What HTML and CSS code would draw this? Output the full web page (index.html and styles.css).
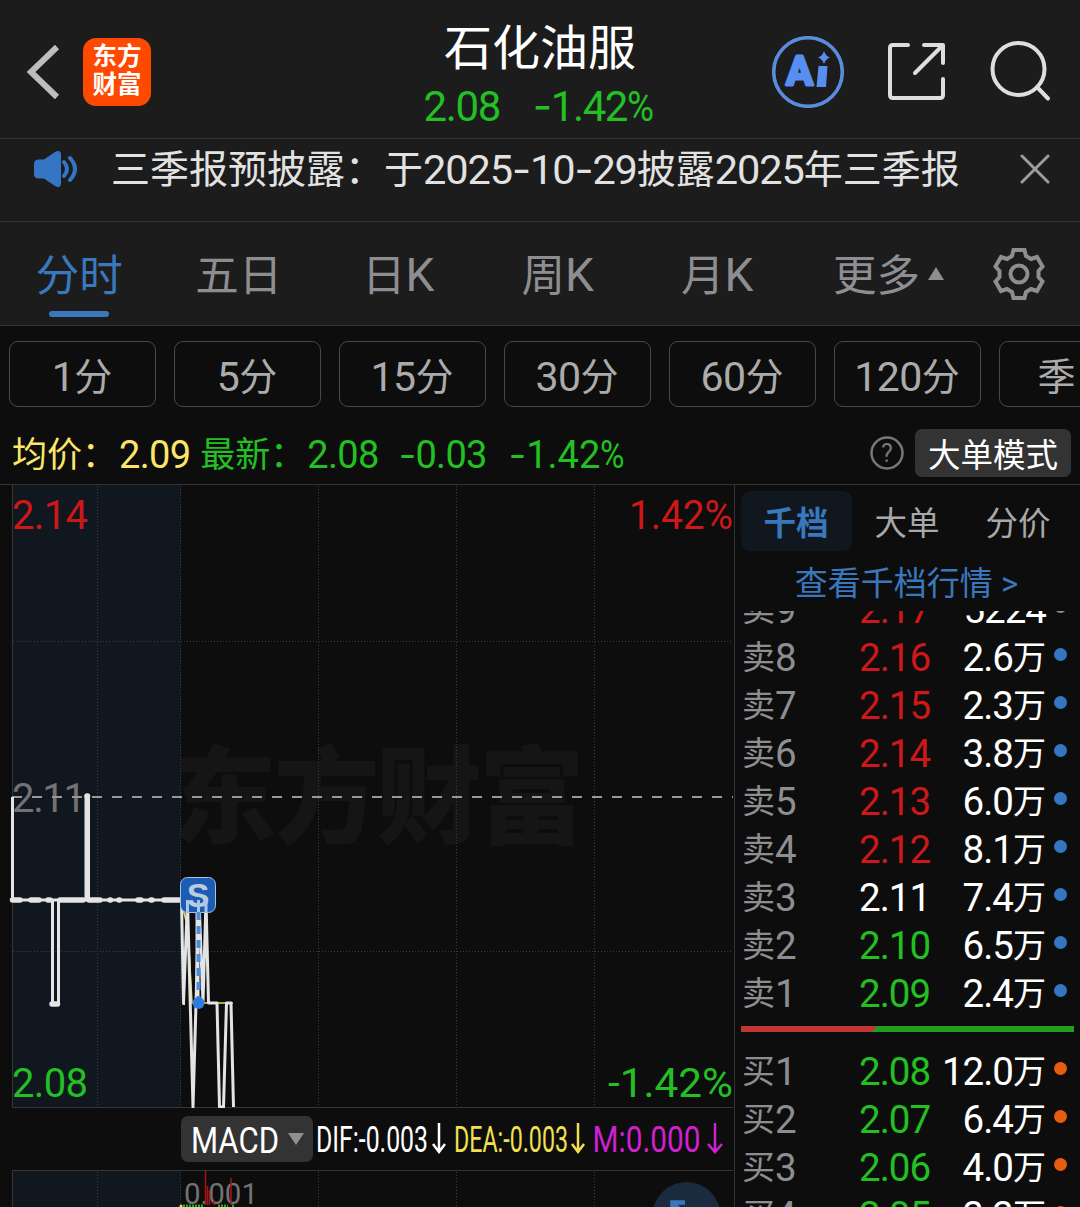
FILE: index.html
```html
<!DOCTYPE html>
<html lang="zh-CN">
<head>
  <meta charset="UTF-8" />
  <meta name="viewport" content="width=device-width, initial-scale=1.0"/>
  <title>石化油服 2.08</title>
  <link rel="stylesheet" href="styles.css">
</head>
<body>
  <header class="header">
    <div class="header-left">
      <svg class="back" width="36" height="58" viewBox="0 0 36 58"><path d="M32 4 L6 29 L32 54" fill="none" stroke="#bdbdbd" stroke-width="6"/></svg>
      <div class="logo">东方<br>财富</div>
    </div>
    <div class="stock">
      <h1>石化油服</h1>
      <p class="quote green"><span>2.08</span><span><i class="dash">-</i>1.42<i class="pct">%</i></span></p>
    </div>
    <div class="header-right">
      <svg width="72" height="72" viewBox="0 0 72 72">
        <circle cx="36" cy="36" r="34.3" fill="none" stroke="#5a8cdc" stroke-width="3.6"/>
        <text class="ai-text" x="14" y="48.500" textLength="27" lengthAdjust="spacingAndGlyphs">A</text>
        <path d="M46.500 30 h9 l-1.500 21 h-9.500z M52 15 q1.500 5 6 6.500 q-4.500 1.500 -6 6.500 q-1.500 -5 -6 -6.500 q4.500 -1.500 6 -6.500z" fill="#568ff0"/>
      </svg>
      <svg width="60" height="60" viewBox="0 0 60 60" fill="none" stroke="#dedede" stroke-width="4" stroke-linecap="round" stroke-linejoin="round">
        <path d="M21 3 H6 Q3 3 3 6 V53 Q3 56 6 56 H53 Q56 56 56 53 V37"/>
        <path d="M37 3 H56 V21 M55 4 L28 31"/>
      </svg>
      <svg width="62" height="62" viewBox="0 0 62 62" fill="none" stroke="#dedede" stroke-width="4" stroke-linecap="round">
        <circle cx="28.500" cy="28" r="26"/>
        <path d="M47 46 L58 57.500"/>
      </svg>
    </div>
  </header>

  <div class="notice">
    <svg width="46" height="38" viewBox="0 0 46 38">
      <path d="M1 14 Q1 9.500 6 9.500 H11 L22 2 Q28 -1 28 5 V33 Q28 39 22 36 L11 28.500 H6 Q1 28.500 1 24z" fill="#3576c4"/>
      <path d="M31 12 Q37 19 31 26 M37 8 Q47 19 37 30" fill="none" stroke="#3576c4" stroke-width="4" stroke-linecap="round"/>
    </svg>
    <p>三季报预披露：于<span class="num">2025<i class="dash">-</i>10<i class="dash">-</i>29</span>披露<span class="num">2025</span>年三季报</p>
    <svg class="close" width="30" height="30" viewBox="0 0 30 30"><path d="M2 2 L28 28 M28 2 L2 28" stroke="#9c9c9c" stroke-width="3" stroke-linecap="round"/></svg>
  </div>

  <nav class="tabs">
    <a class="tab active">分时</a>
    <a class="tab">五日</a>
    <a class="tab">日<span>K</span></a>
    <a class="tab">周<span>K</span></a>
    <a class="tab">月<span>K</span></a>
    <a class="tab more">更多<svg width="16" height="14" viewBox="0 0 16 14"><path d="M8 1 L16 14 H0z" fill="#8e8e92"/></svg></a>
    <svg class="gear" width="54" height="54" viewBox="0 0 54 54" fill="none" stroke="#8e8e92" stroke-width="4">
      <path d="M21.500 3 H32.500 L34 9 L39 12 L45 10 L50.500 19.500 L46.500 24 V30 L50.500 34.500 L45 44 L39 42 L34 45 L32.500 51 H21.500 L20 45 L15 42 L9 44 L3.500 34.500 L7.500 30 V24 L3.500 19.500 L9 10 L15 12 L20 9z"/>
      <circle cx="27" cy="27" r="8.500"/>
    </svg>
  </nav>

  <div class="periods">
    <button><span>1</span>分</button>
    <button><span>5</span>分</button>
    <button><span>15</span>分</button>
    <button><span>30</span>分</button>
    <button><span>60</span>分</button>
    <button><span>120</span>分</button>
    <button>季<span>K</span></button>
  </div>

  <div class="info">
    <span class="yellow">均价：<span class="num">2.09</span></span>
    <span class="green latest">最新：<span class="num">2.08</span></span>
    <span class="green change"><span class="num"><i class="dash">-</i>0.03</span></span>
    <span class="green change"><span class="num"><i class="dash">-</i>1.42<i class="pct">%</i></span></span>
    <svg class="help" width="34" height="34" viewBox="0 0 34 34"><circle cx="17" cy="17" r="15.500" fill="none" stroke="#777" stroke-width="2.500"/><text x="17" y="26" text-anchor="middle">?</text></svg>
    <button class="mode">大单模式</button>
  </div>

  <main class="main">
    <section class="charts">
      <!-- price line -->
      <svg class="price-chart" width="734" height="623" viewBox="0 485 734 623">
        <rect x="12" y="485" width="169" height="622" fill="#10171f"/>
        <text class="watermark" x="171" y="835" textLength="414">东方财富</text>
        <g class="grid">
          <path d="M97.500 486V1107 M180.500 486V1107 M318.500 486V1107 M456.500 486V1107 M594.500 486V1107"/>
          <path d="M13 641.500H733 M13 951.500H733"/>
        </g>
        <path class="frame" d="M12.500 485V1107.500H733"/>
        <text class="label grey" x="12" y="812" textLength="74">2.11</text>
        <path d="M12 797H733" stroke="#999" stroke-width="2" stroke-dasharray="10 10"/>

        <path d="M181 900 L186 921 M187 910 L192 1003 H233" fill="none" stroke="#e8dc50" stroke-width="1.500"/>
        <g fill="none" stroke="#e4e4e4" stroke-width="3">
          <path d="M12.500 797V900H181"/>
          <path d="M52.500 900V1004H58.500V900 M86 900V797H88.500V900"/>
          <path d="M181.500 900 L183.500 1003 L187.500 900 L193 1107 L199 900 L203 1003 L206 900 L208.500 1003 H217 L219.500 1107 H223.500 L226.500 1003 H231 L233.500 1107" stroke-linejoin="round"/>
          <path d="M197.500 1003V905 M182.500 1003 H185" stroke-width="4"/>
        </g>
        <path class="ticks" d="M12.500 900H20 M31 900H39 M48 900H50 M60 900H83 M89 900H100 M110 900H110.500 M119 900H119.500 M138 900H141 M151 900H152 M164 900H180 M52 1004H57.500 M87 796H87.500"/>

        <rect x="180.500" y="877.500" width="35" height="35" rx="7" fill="#1a5db2" stroke="#a9c2e4"/>
        <text class="sell" x="198" y="907" text-anchor="middle">S</text>
        <path d="M187.500 900V912 M198.500 900V912 M206 900V912" stroke="#a9c6ee" stroke-width="3"/>
        <path d="M198.500 912V1000" stroke="#4b8ce0" stroke-width="4" stroke-dasharray="8 6"/>
        <circle cx="198.500" cy="1003" r="6" fill="#2f7be0"/>

        <text class="label red" x="12" y="528.500" textLength="76">2.14</text>
        <text class="label red" x="629" y="528.500" textLength="104" lengthAdjust="spacingAndGlyphs">1.42%</text>
        <text class="label green" x="12" y="1097" textLength="76">2.08</text>
        <text class="label green" x="608" y="1097" textLength="125" lengthAdjust="spacingAndGlyphs">-1.42%</text>
      </svg>

      <div class="indicator">
        <button class="macd">
          <svg width="92" height="45" viewBox="-2 0 92 45"><text x="0" y="35.500" textLength="88" lengthAdjust="spacingAndGlyphs">MACD</text></svg>
          <svg width="16" height="14" viewBox="0 0 16 14"><path d="M0 1 H16 L8 13z" fill="#909090"/></svg>
        </button>
        <svg class="readout" width="420" height="62" viewBox="313 1108 420 62">
          <text x="316" y="1152" fill="#fff" textLength="112" lengthAdjust="spacingAndGlyphs">DIF:-0.003</text>
          <path d="M439 1123V1152 M433 1144L439 1152L445 1144" stroke="#fff"/>
          <text x="454" y="1152" fill="#f0e050" textLength="114" lengthAdjust="spacingAndGlyphs">DEA:-0.003</text>
          <path d="M578 1123V1152 M572 1144L578 1152L584 1144" stroke="#f0e050"/>
          <text x="592.500" y="1152" fill="#d020d0" textLength="108" lengthAdjust="spacingAndGlyphs">M:0.000</text>
          <path d="M715 1123V1152 M708 1144L715 1152L722 1144" stroke="#d020d0"/>
        </svg>
      </div>

      <!-- MACD bars -->
      <svg class="macd-chart" width="734" height="37" viewBox="0 1170 734 37">
        <rect x="12" y="1170" width="169" height="37" fill="#10171f"/>
        <path class="grid" d="M97.500 1172V1207 M180.500 1172V1207 M318.500 1172V1207 M456.500 1172V1207 M594.500 1172V1207"/>
        <path class="frame" d="M12.500 1207V1170.500H733"/>
        <text class="scale" x="184" y="1203.500" textLength="74">0.001</text>
        <path d="M205.500 1171V1205 M207.500 1186V1205 M209.500 1190V1205 M231 1178V1205 M214 1200V1205" stroke="#a81414" stroke-width="1.500"/>
        <path d="M183 1206H203 M218 1206H228 M232 1206H234" stroke="#18b418" stroke-width="3" stroke-dasharray="2 1"/>
        <circle cx="181" cy="1206" r="1.500" fill="#f0e050"/>
        <circle cx="686.500" cy="1216" r="34" fill="#1a2b40"/>
        <path d="M672.500 1214V1202.500H685 M673 1203L684 1214" fill="none" stroke="#3a78be" stroke-width="4.500"/>
      </svg>
    </section>

    <aside class="book">
      <div class="book-tabs">
        <a class="active">千档</a>
        <a>大单</a>
        <a>分价</a>
      </div>
      <a class="book-link">查看千档行情 &gt;</a>
      <div class="levels">
        <div class="row first"><span>卖<b>9</b></span><b class="red">2.17</b><span class="vol"><b>5224</b></span><i class="dot none"></i></div>
        <div class="row"><span>卖<b>8</b></span><b class="red">2.16</b><span class="vol"><b>2.6</b>万</span><i class="dot"></i></div>
        <div class="row"><span>卖<b>7</b></span><b class="red">2.15</b><span class="vol"><b>2.3</b>万</span><i class="dot"></i></div>
        <div class="row"><span>卖<b>6</b></span><b class="red">2.14</b><span class="vol"><b>3.8</b>万</span><i class="dot"></i></div>
        <div class="row"><span>卖<b>5</b></span><b class="red">2.13</b><span class="vol"><b>6.0</b>万</span><i class="dot"></i></div>
        <div class="row"><span>卖<b>4</b></span><b class="red">2.12</b><span class="vol"><b>8.1</b>万</span><i class="dot"></i></div>
        <div class="row"><span>卖<b>3</b></span><b class="white">2.11</b><span class="vol"><b>7.4</b>万</span><i class="dot"></i></div>
        <div class="row"><span>卖<b>2</b></span><b class="green">2.10</b><span class="vol"><b>6.5</b>万</span><i class="dot"></i></div>
        <div class="row"><span>卖<b>1</b></span><b class="green">2.09</b><span class="vol"><b>2.4</b>万</span><i class="dot"></i></div>
        <div class="ratio"></div>
        <div class="row"><span>买<b>1</b></span><b class="green">2.08</b><span class="vol"><b>12.0</b>万</span><i class="dot buy"></i></div>
        <div class="row"><span>买<b>2</b></span><b class="green">2.07</b><span class="vol"><b>6.4</b>万</span><i class="dot buy"></i></div>
        <div class="row"><span>买<b>3</b></span><b class="green">2.06</b><span class="vol"><b>4.0</b>万</span><i class="dot buy"></i></div>
        <div class="row"><span>买<b>4</b></span><b class="green">2.05</b><span class="vol"><b>3.3</b>万</span><i class="dot buy"></i></div>
      </div>
    </aside>
  </main>
</body>
</html>
```
FILE: styles.css
```css
* {
  box-sizing: border-box;
}
body {
  margin: 0;
  width: 1080px;
  height: 1207px;
  overflow: hidden;
  background: #0d0d0d;
  color: #8e8e92;
  font-family: Roboto, "Noto Sans CJK SC", sans-serif;
}
h1, p {
  margin: 0;
  font-weight: normal;
}
i, b {
  font-style: normal;
  font-weight: normal;
}
button {
  font-family: inherit;
  border: none;
  padding: 0;
}
svg {
  flex: none;
}
.green {
  color: #22c022;
  fill: #22c022;
}
.red {
  color: #cc1818;
  fill: #cc1818;
}
.grey {
  fill: #727274;
}
.white {
  color: #fff;
}
.yellow {
  color: #fbe668;
}
.dash {
  font-family: Inter, sans-serif;
  line-height: 0;
}
.pct {
  display: inline-block;
  line-height: 0;
  transform: scaleX(0.88);
  transform-origin: left;
  margin-right: -4px;
}

/* Header */
.header {
  display: grid;
  grid-template-columns: 1fr auto 1fr;
  height: 139px;
  background: #1c1c1c;
  border-bottom: 1px solid #333;
}
.header-left {
  display: flex;
  align-items: center;
  gap: 22px;
  height: 143px;
  padding-left: 25px;
}
.logo {
  width: 68px;
  height: 68px;
  padding-top: 5px;
  border-radius: 13px;
  background: #ff4800;
  color: #fff;
  font-size: 24.500px;
  font-weight: bold;
  line-height: 28px;
  text-align: center;
}
.stock {
  padding-top: 21px;
  text-align: center;
}
.stock h1 {
  color: #fff;
  font-size: 48px;
  line-height: 56px;
}
.quote {
  display: flex;
  justify-content: center;
  gap: 33px;
  padding: 6px 4px 0 0;
  font-size: 42px;
  line-height: 48px;
  letter-spacing: -1.400px;
}
.header-right {
  display: flex;
  align-items: center;
  justify-content: flex-end;
  gap: 43px;
  height: 143px;
  padding-right: 28px;
}
.ai-text {
  font-size: 41px;
  font-weight: bold;
  fill: #568ff0;
  stroke: #568ff0;
  stroke-width: 3;
  stroke-linejoin: round;
}

/* Notice */
.notice {
  display: flex;
  align-items: center;
  height: 83px;
  padding: 0 30px 22px 33px;
  background: #1c1c1c;
  border-bottom: 1px solid #333;
  color: #e2e2e2;
  font-size: 39px;
  line-height: 60px;
}
.notice p {
  flex: 1;
  padding: 1px 0 0 32px;
  white-space: nowrap;
}
.notice .num {
  font-size: 41.500px;
  line-height: 0;
  letter-spacing: -1.100px;
  vertical-align: -1px;
}

/* Tabs */
.tabs {
  display: flex;
  align-items: center;
  height: 104px;
  background: #1c1c1c;
  border-bottom: 1px solid #333;
}
.tab {
  position: relative;
  width: 159.500px;
  height: 103px;
  padding: 7px 1px 0 0;
  font-size: 43.500px;
  line-height: 96px;
  text-align: center;
}
.tab span {
  font-size: 46px;
  line-height: 0;
}
.tab.active {
  color: #3a78be;
}
.tab.active::after {
  content: "";
  position: absolute;
  left: 49px;
  bottom: 8px;
  width: 60px;
  height: 6px;
  border-radius: 3px;
  background: #3a78be;
}
.tab.more {
  width: 194px;
  padding-right: 12px;
}
.tab.more svg {
  margin: 0 0 11px 8px;
}

/* Periods */
.periods {
  display: flex;
  gap: 18px;
  padding: 15px 0 0 9px;
  overflow: hidden;
}
.periods button {
  flex: none;
  width: 147px;
  height: 66px;
  padding: 5px 1px 0 0;
  border: 1.500px solid #484848;
  border-radius: 9px;
  background: none;
  color: #ababab;
  font-size: 38px;
  line-height: 58px;
}
.periods span {
  font-size: 41px;
  line-height: 0;
  letter-spacing: -0.500px;
  vertical-align: -1px;
}
.periods button:last-child {
  padding-right: 4px;
}
.periods button:last-child span {
  margin-left: 3px;
}

/* Price summary */
.info {
  display: flex;
  align-items: center;
  height: 78px;
  padding: 15px 9px 0 12px;
  border-bottom: 1px solid #333;
  font-size: 35px;
  line-height: 57px;
  white-space: nowrap;
}
.info > span {
  padding-top: 5px;
}
.info .num {
  font-size: 38px;
  line-height: 0;
  letter-spacing: -0.700px;
  vertical-align: -1px;
}
.info .yellow .num,
.info .latest .num {
  margin-left: 2px;
}
.info .latest {
  margin-left: 10px;
}
.info .change {
  margin-left: 20px;
}
.info .change + .change .num {
  margin-left: 2px;
  letter-spacing: 0;
}
.help {
  margin-left: auto;
}
.help text {
  font-size: 25px;
  fill: #777;
}
.mode {
  width: 156px;
  height: 48px;
  margin-left: 11px;
  padding-top: 6px;
  border-radius: 7px;
  background: #333;
  color: #fff;
  font-size: 32.500px;
  line-height: 42px;
}

/* Charts */
.main {
  display: flex;
  height: 722px;
}
.charts {
  width: 735px;
  border-right: 1px solid #333;
}
.charts > svg {
  display: block;
}
.grid {
  fill: none;
  stroke: #3a3c40;
  stroke-dasharray: 1 2;
}
.frame {
  fill: none;
  stroke: #363636;
}
.label {
  font-size: 40px;
}
.watermark {
  font-size: 106px;
  font-weight: 900;
  fill: #151515;
}
.ticks {
  stroke: #e4e4e4;
  stroke-width: 5.500;
  stroke-linecap: round;
}
.sell {
  font-family: "Liberation Sans", sans-serif;
  font-size: 34px;
  font-weight: bold;
  fill: #bccbdf;
}
.indicator {
  display: flex;
  height: 62px;
  padding-left: 181px;
}
.macd {
  display: flex;
  align-items: center;
  gap: 7px;
  width: 132px;
  height: 46px;
  margin-top: 8px;
  padding-left: 8px;
  border-radius: 7px;
  background: #333;
}
.macd text {
  font-size: 36.500px;
  fill: #fff;
}
.readout text {
  font-size: 37px;
}
.readout path {
  fill: none;
  stroke-width: 2.500;
}
.scale {
  font-size: 29.500px;
  fill: #727274;
}

/* Order book */
.book {
  display: flex;
  flex-direction: column;
  flex: 1;
  overflow: hidden;
}
.book-tabs {
  display: flex;
  padding: 6px 0 0 6px;
  color: #a8a8a8;
}
.book-tabs a {
  width: 111px;
  height: 60px;
  padding: 7px 1px 0 0;
  border-radius: 9px;
  font-size: 32.500px;
  line-height: 53px;
  text-align: center;
}
.book-tabs .active {
  background: #10171f;
  color: #3a78be;
  font-weight: bold;
}
.book-link {
  height: 60px;
  padding: 6px 2px 0 0;
  color: #3a78be;
  font-size: 33px;
  line-height: 53px;
  text-align: center;
}
.levels {
  flex: 1;
  overflow: hidden;
}
.row {
  display: grid;
  grid-template-columns: 117px 80px 107px 13px;
  align-items: start;
  height: 48px;
  padding-left: 7px;
  font-size: 33px;
  line-height: 47px;
}
.row.first {
  margin-top: -25px;
}
.row b {
  font-size: 38.500px;
  line-height: 48px;
  letter-spacing: -1px;
}
.row span b {
  line-height: 0;
  vertical-align: -2px;
}
.vol {
  color: #fff;
  white-space: nowrap;
  justify-self: end;
}
.dot {
  align-self: start;
  width: 13px;
  height: 13px;
  margin: 14px 0 0 8px;
  border-radius: 50%;
  background: #3576c4;
}
.dot.buy {
  background: #e85c10;
}
.dot.none {
  background: #8e8e92;
}
.ratio {
  height: 6px;
  margin: 8px 6px 16px;
  background: linear-gradient(135deg, #c03434 96px, #1f9e1f 97px);
}
```
